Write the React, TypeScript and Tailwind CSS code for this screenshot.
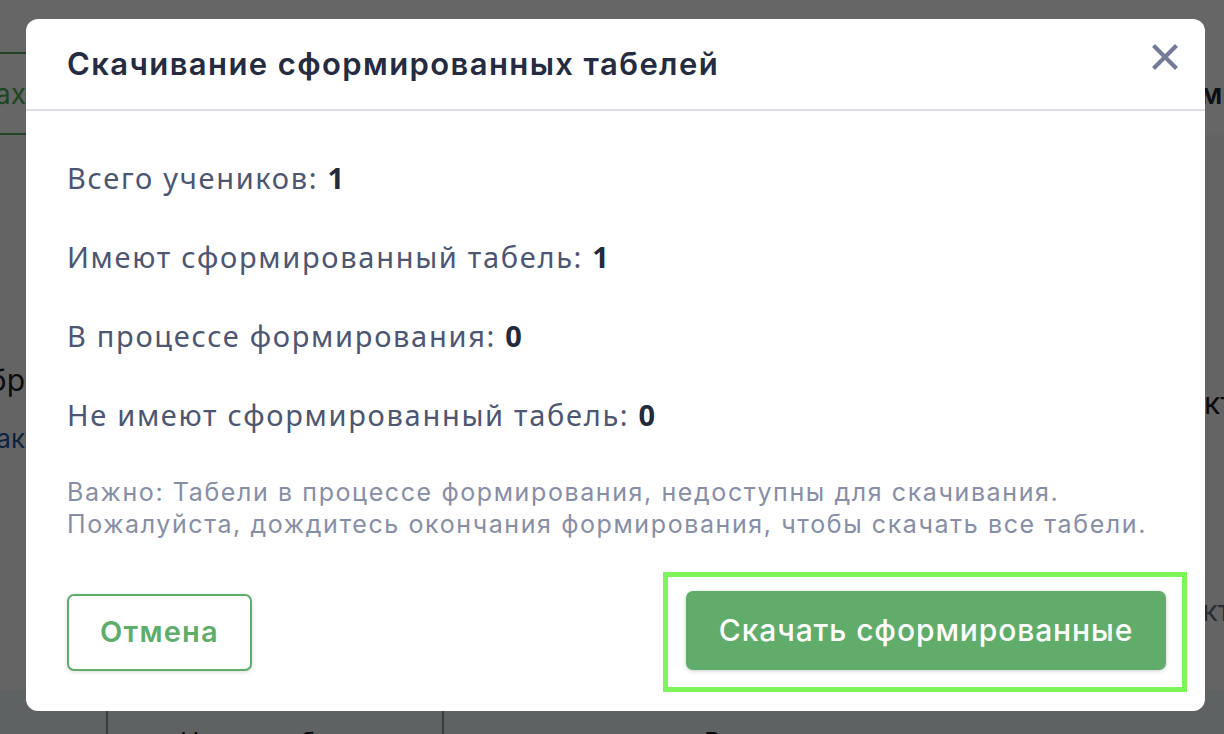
import React from "react";

const inter = "font-['Inter','Noto_Sans',sans-serif]";
const stat = "font-['Noto_Sans','Open_Sans',sans-serif]";

function Stat({ label, value }: { label: string; value: string }) {
  return (
    <div className={`h-[40px] flex items-center text-[29px] tracking-[1.7px] leading-[40px] text-[#4d5672] ${stat}`}>
      <span>{label}&nbsp;</span>
      <span className="font-bold text-[#232a3c]">{value}</span>
    </div>
  );
}

export default function App() {
  return (
    <div className="relative w-[1224px] h-[734px] overflow-hidden bg-white font-['Inter',sans-serif]">
      {/* underlying page */}
      <div className="flex flex-col w-full h-full">
        <div className="h-[52px] bg-white" />
        <div className="h-[83px] flex items-stretch justify-between">
          <div className="w-[200px] -ml-[174px] border-y-2 border-[#5aa75f] flex items-center justify-end pr-[0px] text-[28px] text-[#4fae5a] whitespace-nowrap">
            Размах
          </div>
          <div className="w-[120px] -mr-[96px] flex items-center text-[28px] text-[#222733] font-semibold whitespace-nowrap">
            ми
          </div>
        </div>
        <div className="h-[30px] bg-[#f7f8f9]" />
        <div className="flex-1 bg-[#fafbfc] flex justify-between">
          <div className="w-[120px] -ml-[95px] flex flex-col items-end pt-[195px]">
            <div className="text-[30px] text-[#1c1f29] leading-[40px] whitespace-nowrap">Обр</div>
            <div className="mt-[22px] text-[26px] text-[#1d5aa6] leading-[34px] whitespace-nowrap">Закак</div>
          </div>
          <div className="w-[120px] -mr-[78px] flex flex-col pt-[218px]">
            <div className="text-[30px] text-[#1c1f29] leading-[40px] whitespace-nowrap">Экт</div>
            <div className="mt-[170px] text-[28px] text-[#6c7280] leading-[36px] whitespace-nowrap">Экт</div>
          </div>
        </div>
        <div className="h-[44px] bg-[#eef6f8] flex">
          <div className="w-[108px] border-r-2 border-[#8c9396]" />
          <div className="w-[336px] border-r-2 border-[#8c9396] pl-[72px] pt-[37px] text-[26px] text-[#1c1f29] leading-[30px] whitespace-nowrap">
            Номер табеля
          </div>
          <div className="flex-1 pl-[260px] pt-[37px] text-[26px] text-[#1c1f29] leading-[30px]">Время</div>
        </div>
      </div>

      {/* overlay */}
      <div className="absolute inset-0 bg-black/60" />

      {/* modal */}
      <div className="absolute left-[26px] top-[19px] w-[1179px] h-[692px] rounded-[12px] bg-white flex flex-col">
        <div className="h-[92px] shrink-0 border-b-2 border-[#dbdfe3] flex items-center justify-between pl-[41px] pr-[27px]">
          <h2 className={`text-[31px] tracking-[1.4px] font-semibold text-[#252b40] ${inter}`}>
            Скачивание сформированных табелей
          </h2>
          <svg width="26" height="26" viewBox="0 0 26 26" className="-mt-[14px]">
            <path d="M3 3 L23 23 M23 3 L3 23" stroke="#737b99" strokeWidth="4.2" strokeLinecap="square" />
          </svg>
        </div>

        <div className="px-[41px] pt-[47px] flex flex-col gap-[39px]">
          <Stat label="Всего учеников:" value="1" />
          <Stat label="Имеют сформированный табель:" value="1" />
          <Stat label="В процессе формирования:" value="0" />
          <Stat label="Не имеют сформированный табель:" value="0" />
        </div>

        <div className={`px-[41px] mt-[41px] text-[25px] tracking-[1.6px] leading-[32px] text-[#878ea7] whitespace-nowrap ${inter}`}>
          <p>Важно: Табели в процессе формирования, недоступны для скачивания.</p>
          <p>Пожалуйста, дождитесь окончания формирования, чтобы скачать все табели.</p>
        </div>

        <div className="mt-[32px] flex items-center justify-between pl-[41px] pr-[18px]">
          <button
            className={`w-[185px] h-[77px] rounded-[7px] border-2 border-[#5fad6b] bg-white text-[29px] tracking-[1.2px] font-semibold text-[#5fad6b] shadow-[0_1px_4px_rgba(0,0,0,0.15)] ${inter}`}
          >
            Отмена
          </button>
          <div className="border-[5px] border-[#7ef65b] pt-[14px] pb-[17px] pl-[18px] pr-[16px]">
            <button
              className={`w-[480px] h-[79px] rounded-[7px] bg-[#60ad6b] text-[30px] tracking-[0.9px] font-medium text-white shadow-[0_1px_4px_rgba(0,0,0,0.2)] ${inter}`}
            >
              Скачать сформированные
            </button>
          </div>
        </div>
      </div>
    </div>
  );
}
